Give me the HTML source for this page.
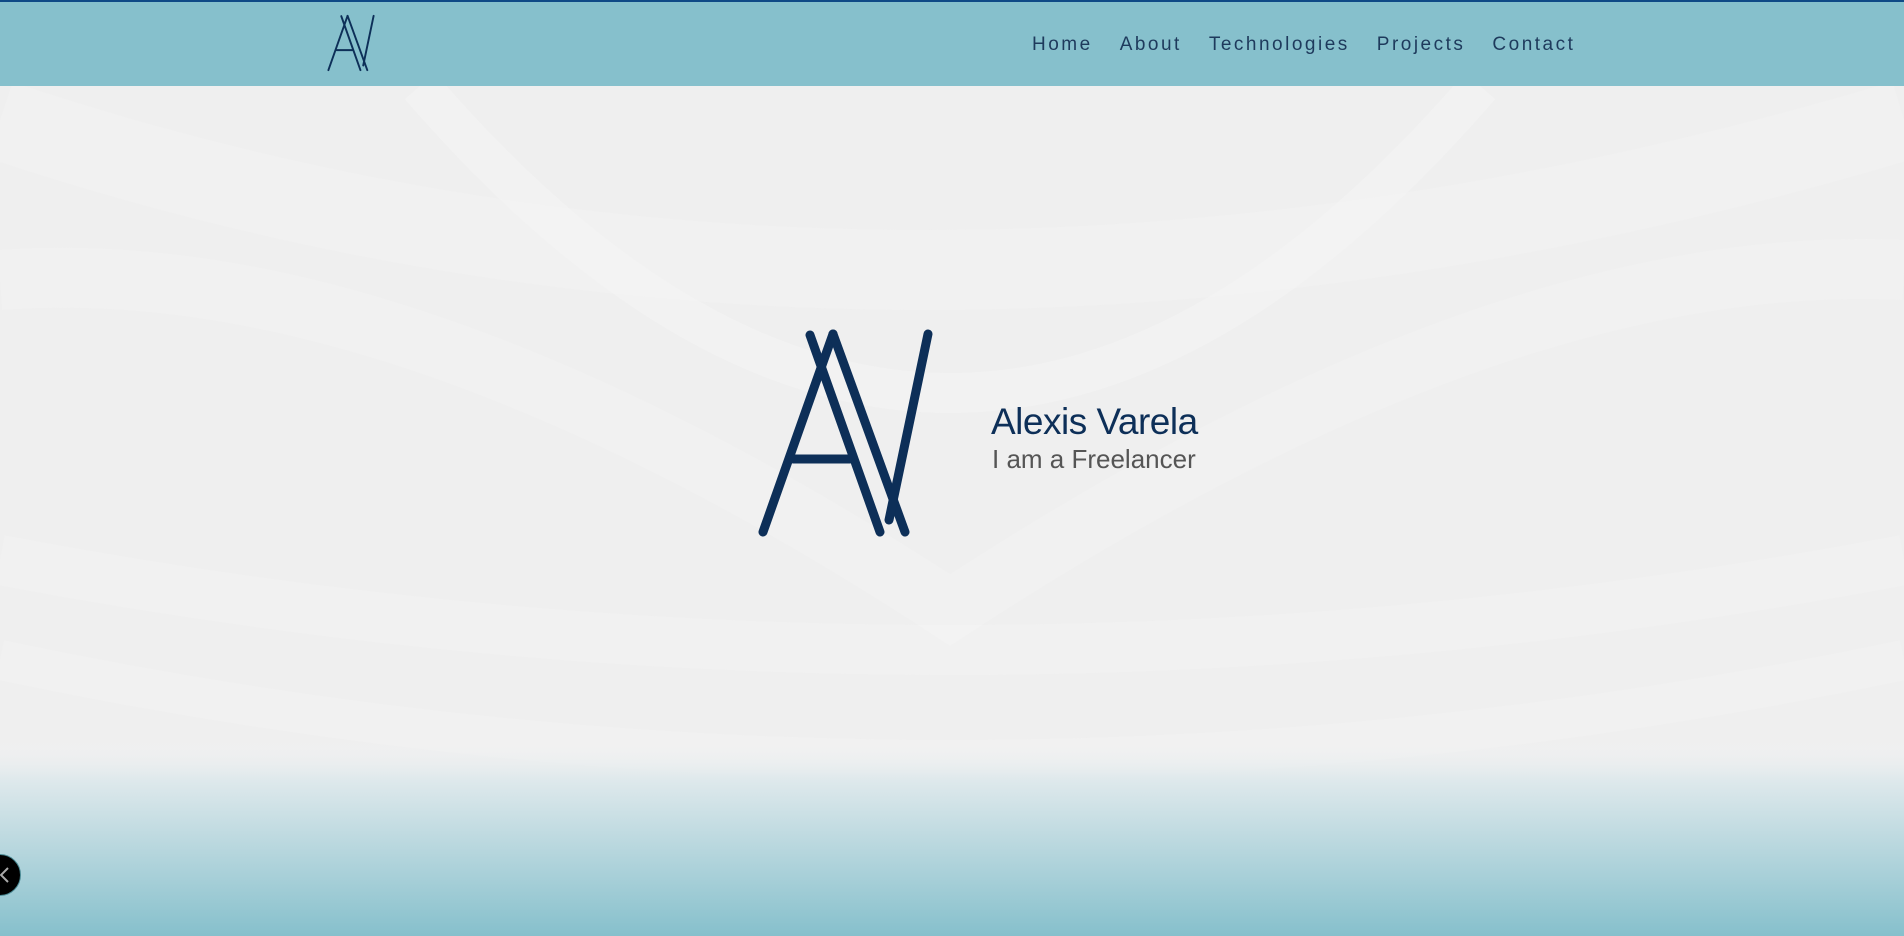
<!DOCTYPE html>
<html><head><meta charset="utf-8"><style>
html,body{margin:0;padding:0;width:1904px;height:936px;overflow:hidden;font-family:"Liberation Sans",sans-serif;}
body{position:relative;background:#f1f1f1;}
.bg{position:absolute;left:0;top:0;width:1904px;height:936px;}
header{position:absolute;left:0;top:0;width:1904px;height:86px;background:#86c0cc;border-top:2px solid #0f4a86;box-sizing:border-box;}
nav{position:absolute;top:32px;left:1032px;font-size:19px;letter-spacing:2.5px;color:#1e3a5c;white-space:nowrap;}
nav span{margin-right:27px;}
.name{position:absolute;left:991px;top:401px;font-size:37px;color:#0d2f58;letter-spacing:-0.5px;}
.sub{position:absolute;left:992px;top:444px;font-size:26px;color:#555;}
.close{position:absolute;left:-21px;top:854px;width:40px;height:40px;border-radius:50%;background:#000;border:1px solid #4a8a94;}
</style></head><body>
<svg class="bg" viewBox="0 0 1904 936">
<defs>
<linearGradient id="g" x1="0" y1="0" x2="0" y2="1">
<stop offset="0" stop-color="#f3f3f3" stop-opacity="0"/>
<stop offset="0.2" stop-color="#dfe9ec"/>
<stop offset="1" stop-color="#86c0cc"/>
</linearGradient>
</defs>
<rect width="1904" height="936" fill="#efefef"/>
<path d="M420 86 Q950 700 1480 86" fill="none" stroke="#f8f8f8" stroke-width="40" opacity="0.35"/>
<path d="M0 280 Q400 250 950 610 Q1500 250 1904 270" fill="none" stroke="#f7f7f7" stroke-width="60" opacity="0.35"/>
<path d="M0 560 Q950 740 1904 560" fill="none" stroke="#f6f6f6" stroke-width="50" opacity="0.35"/>
<path d="M0 120 Q900 420 1904 120" fill="none" stroke="#f6f6f6" stroke-width="80" opacity="0.3"/>
<path d="M0 660 Q950 860 1904 660" fill="none" stroke="#f7f7f7" stroke-width="40" opacity="0.35"/>
<rect y="740" width="1904" height="196" fill="url(#g)"/>
</svg>
<header>
<svg style="position:absolute;left:327px;top:12px" width="48" height="58" viewBox="758 328 175 210">
<g stroke="#0d2f58" stroke-width="7" stroke-linecap="round" fill="none">
<line x1="833" y1="334" x2="763" y2="532"/>
<line x1="833" y1="334" x2="905" y2="532"/>
<line x1="810" y1="335" x2="880" y2="532"/>
<line x1="928" y1="334" x2="890" y2="515"/>
<line x1="793" y1="459" x2="850" y2="459"/>
</g></svg>
<nav><span>Home</span><span>About</span><span>Technologies</span><span>Projects</span><span style="margin:0">Contact</span></nav>
</header>
<svg style="position:absolute;left:740px;top:310px" width="200" height="240" viewBox="740 310 200 240">
<g stroke="#0d2f58" stroke-width="9" stroke-linecap="round" fill="none">
<line x1="833" y1="334" x2="763" y2="532"/>
<line x1="833" y1="334" x2="905" y2="532"/>
<line x1="810" y1="335" x2="880" y2="532"/>
<line x1="928" y1="334" x2="889" y2="520"/>
<line x1="793" y1="459" x2="850" y2="459"/>
</g></svg>
<div class="name">Alexis Varela</div>
<div class="sub">I am a Freelancer</div>
<div class="close"><svg width="40" height="40" viewBox="0 0 40 40"><path d="M28 13 L21 20 L28 27" stroke="#aaa" stroke-width="2" fill="none"/></svg></div>
</body></html>
